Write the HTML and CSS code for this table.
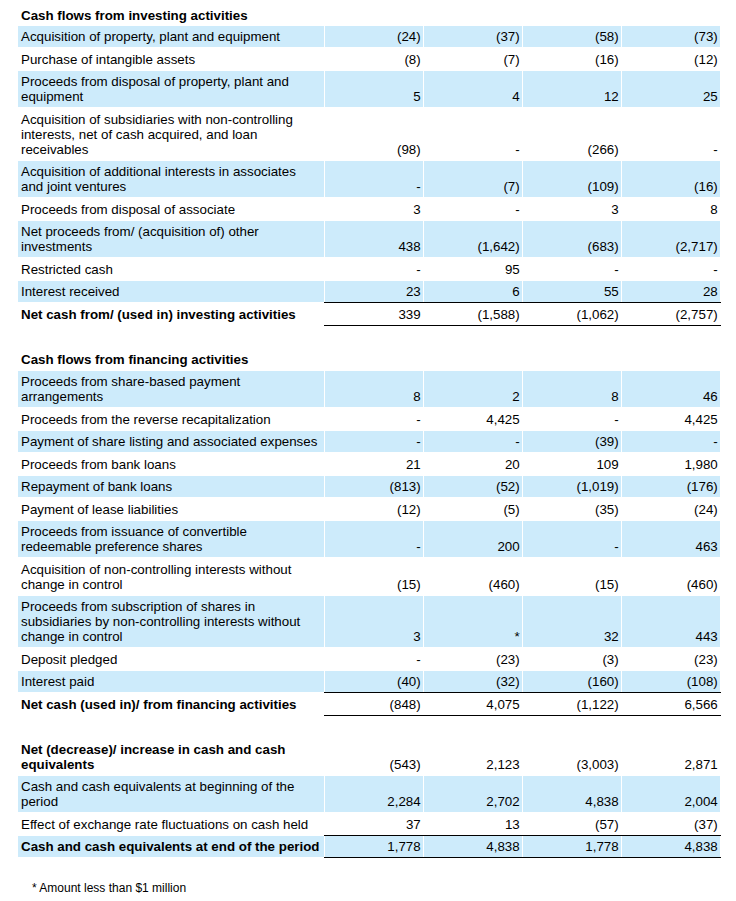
FILE: index.html
```html
<!DOCTYPE html>
<html lang="en">
<head>
<meta charset="utf-8">
<title>Cash flows</title>
<link rel="stylesheet" href="styles.css">
</head>
<body>
<div class="page">
<table class="cf">
  <colgroup>
    <col class="c-label"><col class="c-num"><col class="c-num"><col class="c-num"><col class="c-num">
  </colgroup>
  <tbody>
    <tr class="head first"><td colspan="5">Cash flows from investing activities</td></tr>
    <tr class="shade"><td>Acquisition of property, plant and equipment</td><td>(24)</td><td>(37)</td><td>(58)</td><td>(73)</td></tr>
    <tr><td>Purchase of intangible assets</td><td>(8)</td><td>(7)</td><td>(16)</td><td>(12)</td></tr>
    <tr class="shade"><td>Proceeds from disposal of property, plant and equipment</td><td>5</td><td>4</td><td>12</td><td>25</td></tr>
    <tr><td>Acquisition of subsidiaries with non-controlling interests, net of cash acquired, and loan receivables</td><td>(98)</td><td>-</td><td>(266)</td><td>-</td></tr>
    <tr class="shade"><td>Acquisition of additional interests in associates and joint ventures</td><td>-</td><td>(7)</td><td>(109)</td><td>(16)</td></tr>
    <tr><td>Proceeds from disposal of associate</td><td>3</td><td>-</td><td>3</td><td>8</td></tr>
    <tr class="shade"><td>Net proceeds from/ (acquisition of) other investments</td><td>438</td><td>(1,642)</td><td>(683)</td><td>(2,717)</td></tr>
    <tr><td>Restricted cash</td><td>-</td><td>95</td><td>-</td><td>-</td></tr>
    <tr class="shade"><td>Interest received</td><td>23</td><td>6</td><td>55</td><td>28</td></tr>
    <tr class="total"><td>Net cash from/ (used in) investing activities</td><td>339</td><td>(1,588)</td><td>(1,062)</td><td>(2,757)</td></tr>
    <tr class="spacer"><td colspan="5">&nbsp;</td></tr>
    <tr class="head"><td colspan="5">Cash flows from financing activities</td></tr>
    <tr class="shade"><td>Proceeds from share-based payment arrangements</td><td>8</td><td>2</td><td>8</td><td>46</td></tr>
    <tr><td>Proceeds from the reverse recapitalization</td><td>-</td><td>4,425</td><td>-</td><td>4,425</td></tr>
    <tr class="shade"><td>Payment of share listing and associated expenses</td><td>-</td><td>-</td><td>(39)</td><td>-</td></tr>
    <tr><td>Proceeds from bank loans</td><td>21</td><td>20</td><td>109</td><td>1,980</td></tr>
    <tr class="shade"><td>Repayment of bank loans</td><td>(813)</td><td>(52)</td><td>(1,019)</td><td>(176)</td></tr>
    <tr><td>Payment of lease liabilities</td><td>(12)</td><td>(5)</td><td>(35)</td><td>(24)</td></tr>
    <tr class="shade"><td>Proceeds from issuance of convertible redeemable preference shares</td><td>-</td><td>200</td><td>-</td><td>463</td></tr>
    <tr><td>Acquisition of non-controlling interests without change in control</td><td>(15)</td><td>(460)</td><td>(15)</td><td>(460)</td></tr>
    <tr class="shade"><td>Proceeds from subscription of shares in subsidiaries by non-controlling interests without change in control</td><td>3</td><td>*</td><td>32</td><td>443</td></tr>
    <tr><td>Deposit pledged</td><td>-</td><td>(23)</td><td>(3)</td><td>(23)</td></tr>
    <tr class="shade"><td>Interest paid</td><td>(40)</td><td>(32)</td><td>(160)</td><td>(108)</td></tr>
    <tr class="total"><td>Net cash (used in)/ from financing activities</td><td>(848)</td><td>4,075</td><td>(1,122)</td><td>6,566</td></tr>
    <tr class="spacer"><td colspan="5">&nbsp;</td></tr>
    <tr class="strong"><td>Net (decrease)/ increase in cash and cash equivalents</td><td>(543)</td><td>2,123</td><td>(3,003)</td><td>2,871</td></tr>
    <tr class="shade"><td>Cash and cash equivalents at beginning of the period</td><td>2,284</td><td>2,702</td><td>4,838</td><td>2,004</td></tr>
    <tr><td>Effect of exchange rate fluctuations on cash held</td><td>37</td><td>13</td><td>(57)</td><td>(37)</td></tr>
    <tr class="shade total"><td>Cash and cash equivalents at end of the period</td><td>1,778</td><td>4,838</td><td>1,778</td><td>4,838</td></tr>
  </tbody>
</table>
<p class="note">* Amount less than $1 million</p>
</div>
</body>
</html>
```
FILE: styles.css
```css
html, body {
  margin: 0;
  padding: 0;
  background: #fff;
}

body {
  font-family: "Liberation Sans", Arial, sans-serif;
  font-size: 13.33px;
  color: #000;
}

.page {
  padding: 2px 0 0 17px;
}

.cf {
  border-collapse: collapse;
  table-layout: fixed;
  width: 703px;
}

.c-label { width: 307px; }
.c-num { width: 99px; }

.cf td {
  border: 1px solid #fff;
  padding: 3.5px 2.3px 3px 3px;
  line-height: 15px;
  vertical-align: bottom;
  text-align: right;
  white-space: nowrap;
}

.cf td:first-child {
  text-align: left;
  white-space: normal;
  padding-right: 3px;
}

.cf tr.first td {
  padding-top: 4.5px;
  padding-bottom: 2px;
}

.cf tr.shade td {
  background: #cdebfb;
}

.cf tr.head td,
.cf tr.total td:first-child,
.cf tr.strong td:first-child {
  font-weight: bold;
}

.cf tr.total td + td {
  border-top: 1px double #000;
  border-bottom: 1px double #000;
}

.note {
  margin: 23px 0 0 15px;
  font-size: 12px;
  line-height: 14px;
}
```
